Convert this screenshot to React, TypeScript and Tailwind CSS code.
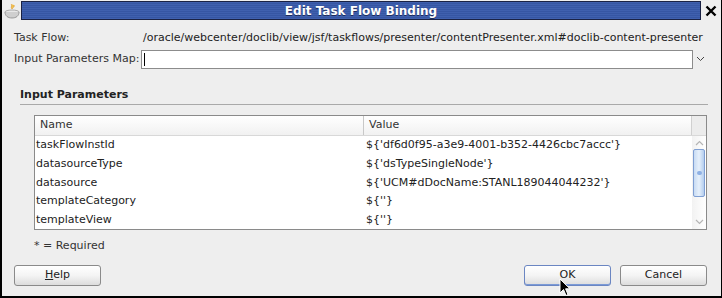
import React from "react";

const rows = [
  ["taskFlowInstId", "${'df6d0f95-a3e9-4001-b352-4426cbc7accc'}"],
  ["datasourceType", "${'dsTypeSingleNode'}"],
  ["datasource", "${'UCM#dDocName:STANL189044044232'}"],
  ["templateCategory", "${''}"],
  ["templateView", "${''}"],
];

function CupIcon() {
  return (
    <svg width="18" height="16" viewBox="0 0 18 16">
      <path d="M8 1c2 1 -1 3 1 5c1-2 3-2 2-4" fill="#f2c14e" stroke="#d9962a" strokeWidth="0.6" />
      <ellipse cx="9" cy="9" rx="7" ry="2" fill="#e8e8e8" stroke="#9a9a9a" strokeWidth="0.8" />
      <path d="M2 9c0 4 3 6 7 6s7-2 7-6" fill="#cfcfcf" stroke="#8a8a8a" strokeWidth="0.8" />
    </svg>
  );
}

function Btn({ children, focus }: { children: React.ReactNode; focus?: boolean }) {
  return (
    <div
      className={
        "w-[87px] h-[21px] rounded-[3px] border flex items-center justify-center text-[11px] text-[#222] bg-gradient-to-b from-white via-[#f4f4f4] to-[#dcdcdc] " +
        (focus ? "border-[#6b86c2] shadow-[inset_0_-1px_0_#7b9ad6]" : "border-[#8a8a8a]")
      }
    >
      {children}
    </div>
  );
}

export default function App() {
  return (
    <div
      className="w-[722px] h-[298px] bg-[#eeeeee] border-l-2 border-b-2 border-r border-black flex flex-col text-[#222] relative overflow-hidden"
      style={{ fontFamily: '"DejaVu Sans", "Liberation Sans", sans-serif' }}
    >
      {/* Title bar */}
      <div className="h-[20px] flex items-stretch pt-[1px]">
        <div className="w-[19px] flex items-center justify-center">
          <CupIcon />
        </div>
        <div className="flex-1 border border-[#1a2244] bg-[repeating-linear-gradient(180deg,#3f60ae_0px,#3f60ae_1px,#3656a3_1px,#3656a3_2px)] flex items-center justify-center">
          <span className="text-white font-bold text-[12px] leading-none [text-shadow:0_1px_0_#1d2b5a]">
            Edit Task Flow Binding
          </span>
        </div>
        <div className="w-[20px] flex items-center justify-center">
          <svg width="12" height="12" viewBox="0 0 12 12">
            <path d="M1.5 1.5L10.5 10.5M10.5 1.5L1.5 10.5" stroke="#000" strokeWidth="2.4" />
          </svg>
        </div>
      </div>

      <div className="flex flex-col pl-[12px] pr-[14px] text-[11px]">
        {/* Task flow row */}
        <div className="flex items-center h-[20px] mt-[8px] whitespace-nowrap">
          <span className="w-[129px] shrink-0 text-[#333]">Task Flow:</span>
          <span>/oracle/webcenter/doclib/view/jsf/taskflows/presenter/contentPresenter.xml#doclib-content-presenter</span>
        </div>

        {/* Input parameters map row */}
        <div className="flex items-center h-[20px] mt-[1px] whitespace-nowrap">
          <span className="w-[127px] shrink-0 text-[#333]">Input Parameters Map:</span>
          <div className="flex-1 h-[19px] bg-white border border-[#8c8c8c] flex items-center pl-[2px]">
            <div className="w-px h-[13px] bg-black" />
          </div>
          <div className="w-[14px] flex items-center justify-center">
            <svg width="9" height="6" viewBox="0 0 9 6">
              <path d="M1 1L4.5 4.5L8 1" stroke="#444" strokeWidth="1" fill="none" />
            </svg>
          </div>
        </div>

        {/* Input Parameters section */}
        <div className="mt-[20px] pl-[6px] text-[11px] font-bold text-[#222] leading-[12px]">Input Parameters</div>
        <div className="mt-[3px] ml-[6px] mr-[-1px] h-px bg-[#a9a9a9]" />

        {/* Table */}
        <div className="mt-[10px] ml-[20px] w-[673px] h-[115px] border border-[#8a8a8a] bg-white flex flex-col overflow-hidden">
          <div className="h-[20px] flex bg-gradient-to-b from-white to-[#f1f1f1] border-b border-[#d8d8d8] text-[#333] shrink-0">
            <div className="w-[329px] border-r border-[#c8c8c8] pl-[5px] flex items-center">Name</div>
            <div className="flex-1 pl-[5px] flex items-center border-r border-[#d0d0d0]">Value</div>
            <div className="w-[14px] bg-[#ececec]" />
          </div>
          <div className="flex flex-1 min-h-0">
            <div className="flex-1 flex flex-col">
              {rows.map(([n, v]) => (
                <div key={n} className="h-[18.75px] shrink-0 flex items-center">
                  <div className="w-[330px] pl-[1px]">{n}</div>
                  <div className="flex-1 pl-[1px]">{v}</div>
                </div>
              ))}
            </div>
            {/* Scrollbar */}
            <div className="w-[14px] bg-gradient-to-r from-[#f2f2f2] to-white flex flex-col items-center">
              <svg width="9" height="6" viewBox="0 0 9 6" className="mt-[4px]">
                <path d="M1 5L4.5 1.5L8 5" stroke="#b5b5b5" strokeWidth="1.2" fill="none" />
              </svg>
              <div className="mt-[3px] w-[12px] h-[48px] rounded-[2px] border border-[#7f9fd3] bg-gradient-to-r from-[#c8dbf3] via-[#e6f0fb] to-[#b4cdee] flex items-center justify-center">
                <div className="w-[5px] h-[4px] rounded-full bg-[#8eb0e4]" />
              </div>
              <div className="flex-1" />
              <svg width="9" height="6" viewBox="0 0 9 6" className="mb-[4px]">
                <path d="M1 1L4.5 4.5L8 1" stroke="#b5b5b5" strokeWidth="1.2" fill="none" />
              </svg>
            </div>
          </div>
        </div>

        <div className="mt-[8px] ml-[20px] text-[#333]">* = Required</div>

        {/* Buttons */}
        <div className="mt-[10px] flex items-center">
          <Btn>
            <span className="underline">H</span>elp
          </Btn>
          <div className="flex-1" />
          <Btn focus>OK</Btn>
          <div className="w-[9px]" />
          <Btn>Cancel</Btn>
        </div>
      </div>

      {/* Mouse cursor */}
      <svg className="absolute left-[557px] top-[278px]" width="12" height="19" viewBox="0 0 12 19">
        <path d="M1 1L1 15L4.5 11.5L7 17.5L9 16.6L6.6 10.8L11 10.8Z" fill="#000" stroke="#fff" strokeWidth="1" />
      </svg>
    </div>
  );
}
